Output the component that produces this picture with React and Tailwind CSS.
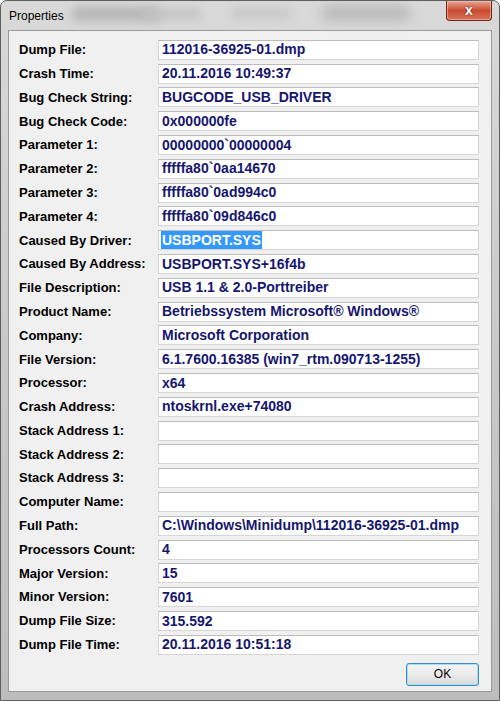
import React from 'react';

const rows = [
  ['Dump File:', '112016-36925-01.dmp'],
  ['Crash Time:', '20.11.2016 10:49:37'],
  ['Bug Check String:', 'BUGCODE_USB_DRIVER'],
  ['Bug Check Code:', '0x000000fe'],
  ['Parameter 1:', '00000000`00000004'],
  ['Parameter 2:', 'fffffa80`0aa14670'],
  ['Parameter 3:', 'fffffa80`0ad994c0'],
  ['Parameter 4:', 'fffffa80`09d846c0'],
  ['Caused By Driver:', 'USBPORT.SYS', true],
  ['Caused By Address:', 'USBPORT.SYS+16f4b'],
  ['File Description:', 'USB 1.1 & 2.0-Porttreiber'],
  ['Product Name:', 'Betriebssystem Microsoft® Windows®'],
  ['Company:', 'Microsoft Corporation'],
  ['File Version:', '6.1.7600.16385 (win7_rtm.090713-1255)'],
  ['Processor:', 'x64'],
  ['Crash Address:', 'ntoskrnl.exe+74080'],
  ['Stack Address 1:', ''],
  ['Stack Address 2:', ''],
  ['Stack Address 3:', ''],
  ['Computer Name:', ''],
  ['Full Path:', 'C:\\Windows\\Minidump\\112016-36925-01.dmp'],
  ['Processors Count:', '4'],
  ['Major Version:', '15'],
  ['Minor Version:', '7601'],
  ['Dump File Size:', '315.592'],
  ['Dump File Time:', '20.11.2016 10:51:18'],
];

const font = { fontFamily: '"Liberation Sans", Arial, sans-serif' };

const PropRow = ({ label, value, selected }) => (
  <div className="flex items-center h-[23.8px]">
    <div className="w-[149px] pl-[10px] text-[13px] font-bold text-black whitespace-nowrap">{label}</div>
    <div className="flex-1 h-[20px] bg-white border border-[#d6d6d6] border-t-[#bcbcbc] flex items-center pl-[2px] overflow-hidden">
      {selected ? (
        <span className="bg-[#3399ff] text-white text-[14px] font-bold h-full flex items-center px-[1px]">{value}</span>
      ) : (
        <span className="text-[#16166e] text-[14px] font-bold whitespace-nowrap pl-[1px]">{value}</span>
      )}
    </div>
  </div>
);

export default function App() {
  return (
    <div className="w-[500px] h-[701px] flex flex-col bg-gradient-to-b from-[#d9d9d9] via-[#c9c9c9] to-[#bdbdbd] border border-[#5e5e5e] rounded-t-[7px] overflow-hidden" style={font}>
      <div className="h-[29px] flex items-start relative">
        <div className="absolute left-[70px] top-[6px] w-[90px] h-[14px] rounded-full bg-[#b6b6b6] blur-[5px]" />
        <div className="absolute left-[140px] top-[8px] w-[60px] h-[10px] rounded-full bg-[#c2c2c2] blur-[4px]" />
        <div className="absolute left-[320px] top-[5px] w-[90px] h-[14px] rounded-full bg-[#b8b8b8] blur-[6px]" />
        <div className="absolute left-[230px] top-[7px] w-[60px] h-[10px] rounded-full bg-[#c6c6c6] blur-[5px]" />
        <span className="relative pl-[8px] pt-[6px] text-[12px] text-black">Properties</span>
        <div className="relative ml-auto mr-[7px] w-[46px] h-[20px] rounded-b-[4px] border border-t-0 border-[#6e2417] bg-gradient-to-b from-[#e7a594] via-[#c94a30] to-[#d9735a] flex items-center justify-center shadow-[inset_0_0_0_1px_rgba(255,210,200,0.5)]">
          <span className="text-white text-[14px] font-bold leading-none -mt-[2px]" style={{ textShadow: '0 0 2px #5a1a10' }}>x</span>
        </div>
      </div>
      <div className="flex-1 mx-[7px] mb-[8px] bg-[#f0f0f0] border border-[#9a9a9a] flex flex-col pt-[7px] pr-[12px]">
        {rows.map(([label, value, selected]) => (
          <PropRow key={label} label={label} value={value} selected={selected} />
        ))}
        <div className="flex justify-end mt-[6px]">
          <button className="w-[73px] h-[23px] rounded-[3px] border border-[#3c8cc4] bg-gradient-to-b from-[#f4f4f4] via-[#ececec] to-[#d9d9d9] shadow-[inset_0_0_0_1px_#a9dcf6] text-[12px] text-black">
            OK
          </button>
        </div>
      </div>
    </div>
  );
}
